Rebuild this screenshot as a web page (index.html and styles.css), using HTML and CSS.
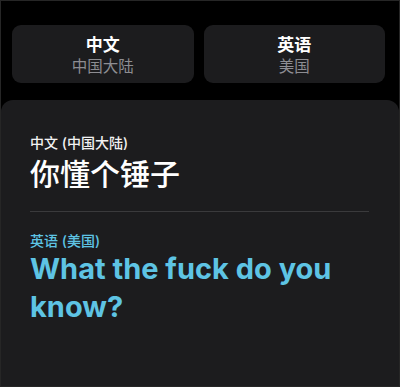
FILE: index.html
```html
<!DOCTYPE html>
<html lang="zh">
<head>
<meta charset="utf-8">
<link rel="stylesheet" href="styles.css">
</head>
<body>
<div class="screen">
  <div class="lang-row">
    <div class="lang-btn">
      <div class="lang-name">中文</div>
      <div class="lang-region">中国大陆</div>
    </div>
    <div class="lang-btn">
      <div class="lang-name">英语</div>
      <div class="lang-region">美国</div>
    </div>
  </div>
  <div class="panel">
    <div class="src-label">中文 (中国大陆)</div>
    <div class="src-text">你懂个锤子</div>
    <div class="divider"></div>
    <div class="dst-label">英语 (美国)</div>
    <div class="dst-text">What the fuck do you know?</div>
  </div>
</div>
</body>
</html>
```
FILE: styles.css
```css
html, body {
  margin: 0;
  padding: 0;
  background: #000;
}
body {
  font-family: Inter, "Noto Sans CJK SC", sans-serif;
  color: #fff;
}
.screen {
  width: 400px;
  height: 387px;
  box-sizing: border-box;
  border: 1px solid #262626;
  overflow: hidden;
  display: flex;
  flex-direction: column;
}
.lang-row {
  display: flex;
  gap: 10px;
  padding: 24px 14px 0 11px;
}
.lang-btn {
  flex: 1;
  height: 58px;
  background: #1c1c1e;
  border-radius: 9px;
  display: flex;
  flex-direction: column;
  align-items: center;
  justify-content: center;
}
.lang-name {
  font-family: "Noto Sans CJK SC", sans-serif;
  font-size: 17px;
  font-weight: 700;
  line-height: 22px;
}
.lang-region {
  font-family: "Noto Sans CJK SC", sans-serif;
  font-size: 15.5px;
  line-height: 20px;
  color: #8d8d92;
}
.panel {
  flex: 1;
  margin-top: 17px;
  background: #1c1c1e;
  border-radius: 12px 12px 0 0;
  padding: 34px 30px 0 29px;
}
.src-label {
  font-size: 14px;
  line-height: 17px;
  font-weight: 500;
  color: #f2f2f2;
}
.src-text {
  font-family: "Noto Sans CJK SC", sans-serif;
  font-size: 30px;
  line-height: 38px;
  font-weight: 500;
  margin-top: 2px;
}
.divider {
  height: 1px;
  background: #3a3a3c;
  margin-top: 20px;
}
.dst-label {
  margin-top: 20px;
  font-size: 14px;
  line-height: 17px;
  font-weight: 500;
  color: #5ec4e4;
}
.dst-text {
  font-size: 29px;
  line-height: 38px;
  font-weight: 700;
  color: #5ec4e4;
  margin-top: 1px;
}
```
